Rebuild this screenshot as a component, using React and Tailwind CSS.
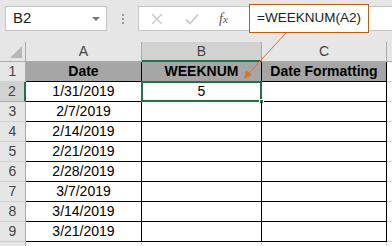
import React from 'react';

const dates = ['1/31/2019', '2/7/2019', '2/14/2019', '2/21/2019', '2/28/2019', '3/7/2019', '3/14/2019', '3/21/2019'];

function RowHead({ n, active }) {
  return (
    <div
      className={`w-[26px] h-full flex items-center justify-center border-r border-b text-[14px] text-[#444] ${
        active ? 'bg-[#d2d2d2] border-r-[#217346] border-r-2 border-b-[#ababab]' : 'bg-[#e6e6e6] border-r-[#ababab] border-b-[#d0d0d0]'
      }`}
    >
      {n}
    </div>
  );
}

export default function App() {
  return (
    <div className="relative w-[392px] h-[246px] overflow-hidden bg-white text-black" style={{ fontFamily: '"Liberation Sans", Arial, sans-serif' }}>
      {/* formula bar */}
      <div className="h-[42px] bg-[#e6e6e6] flex items-start pt-[6px] pl-[5px]">
        <div className="w-[102px] h-[25px] bg-white border border-[#c6c6c6] flex items-center justify-between pl-[7px] pr-[6px] text-[15px] text-[#222]">
          <span>B2</span>
          <span className="w-0 h-0 border-l-[4px] border-r-[4px] border-t-[4px] border-l-transparent border-r-transparent border-t-[#777]" />
        </div>
        <div className="w-[31px] h-[25px] flex flex-col items-center justify-center gap-[2px]">
          <span className="w-[2px] h-[2px] bg-[#999]" />
          <span className="w-[2px] h-[2px] bg-[#999]" />
          <span className="w-[2px] h-[2px] bg-[#999]" />
        </div>
        <div className="flex-1 h-[25px] bg-white border border-[#c6c6c6] border-r-0 flex items-center">
          <svg width="12" height="12" viewBox="0 0 12 12" className="ml-[12px]">
            <path d="M1 1 L11 11 M11 1 L1 11" stroke="#c8c8c8" strokeWidth="1.4" fill="none" />
          </svg>
          <svg width="14" height="12" viewBox="0 0 14 12" className="ml-[22px]">
            <path d="M1 6.5 L5 10.5 L13 1.5" stroke="#c8c8c8" strokeWidth="1.8" fill="none" />
          </svg>
          <span className="ml-[20px] text-[14px] italic text-[#555]" style={{ fontFamily: '"Liberation Serif", serif' }}>
            f<span className="text-[11px]">x</span>
          </span>
        </div>
      </div>

      {/* column headers */}
      <div className="flex h-[20px] text-[14px] text-[#444]">
        <div className="w-[26px] h-full bg-[#e6e6e6] border-r border-b border-[#ababab] flex items-end justify-end pr-[3px] pb-[3px]">
          <span className="w-0 h-0 border-b-[12px] border-l-[12px] border-l-transparent border-b-[#b8b8b8]" />
        </div>
        <div className="w-[116px] h-full bg-[#e6e6e6] border-r border-b border-[#ababab] flex items-center justify-center">A</div>
        <div className="w-[120px] h-full bg-[#d2d2d2] border-r border-r-[#ababab] border-b-2 border-b-[#217346] flex items-center justify-center">B</div>
        <div className="w-[125px] h-full bg-[#e6e6e6] border-r border-b border-[#ababab] flex items-center justify-center">C</div>
        <div className="flex-1 h-full bg-[#e6e6e6] border-b border-[#ababab]" />
      </div>

      {/* row 1 headers */}
      <div className="flex h-[20px]">
        <RowHead n={1} />
        <div className="w-[116px] h-full bg-[#a6a6a6] border-r border-b border-black flex items-center justify-center text-[14px] font-bold">Date</div>
        <div className="w-[120px] h-full bg-[#a6a6a6] border-r border-b border-black flex items-center justify-center text-[14px] font-bold">WEEKNUM</div>
        <div className="w-[125px] h-full bg-[#a6a6a6] border-r border-b border-black flex items-center justify-center text-[14px] font-bold">Date Formatting</div>
        <div className="flex-1 h-full border-b border-[#d4d4d4]" />
      </div>

      {dates.map((d, i) => (
        <div key={d} className="flex h-[20px]">
          <RowHead n={i + 2} active={i === 0} />
          <div className="w-[116px] h-full border-r border-b border-black flex items-center justify-center text-[14px]">{d}</div>
          <div className="relative w-[120px] h-full border-r border-b border-black flex items-center justify-center text-[14px]">
            {i === 0 && (
              <>
                5
                <div className="absolute -left-[1px] -top-[1px] w-[121px] h-[21px] border-2 border-[#217346]" />
                <div className="absolute -right-[3px] -bottom-[3px] w-[5px] h-[5px] bg-[#217346] border border-white" />
              </>
            )}
          </div>
          <div className="w-[125px] h-full border-r border-b border-black" />
          <div className="flex-1 h-full border-b border-[#d4d4d4]" />
        </div>
      ))}

      <div className="flex h-[20px]">
        <div className="w-[26px] h-full bg-[#e6e6e6] border-r border-[#ababab]" />
        <div className="w-[116px] h-full border-r border-[#d4d4d4]" />
        <div className="w-[120px] h-full border-r border-[#d4d4d4]" />
        <div className="w-[125px] h-full border-r border-[#d4d4d4]" />
      </div>

      {/* callout */}
      <div className="absolute left-[249px] top-[4px] w-[120px] h-[29px] border border-[#c55a11] bg-white flex items-center justify-center text-[13.5px] text-[#222]">
        =WEEKNUM(A2)
      </div>
      <svg className="absolute left-0 top-0 pointer-events-none" width="392" height="246">
        <line x1="286" y1="33" x2="249" y2="73" stroke="#d9732a" strokeWidth="1" />
        <path d="M244 79 L246 70 L252 75 Z" fill="#d9732a" />
      </svg>
    </div>
  );
}
